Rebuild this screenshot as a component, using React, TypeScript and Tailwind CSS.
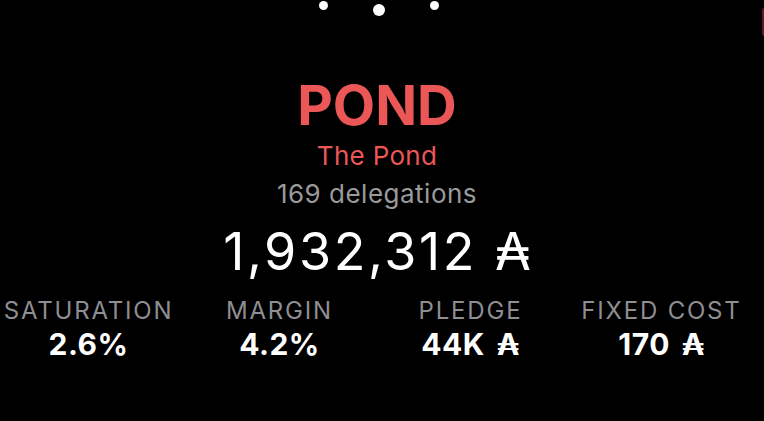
export default function App() {
  const stats = [
    { label: "SATURATION", value: "2.6%", ada: false },
    { label: "MARGIN", value: "4.2%", ada: false },
    { label: "PLEDGE", value: "44K", ada: true },
    { label: "FIXED COST", value: "170", ada: true },
  ];

  return (
    <div className="relative h-[421px] w-[764px] overflow-hidden bg-black font-['Inter','DejaVu_Sans',sans-serif]">
      {/* page dots */}
      <div className="-ml-[7px] flex h-[15px] items-start justify-center gap-[45px]">
        <span className="mt-[1px] h-[9px] w-[9px] rounded-full bg-white" />
        <span className="mt-[4px] h-[12px] w-[12px] rounded-full bg-white" />
        <span className="mt-[1px] h-[9px] w-[9px] rounded-full bg-white" />
      </div>

      {/* edge of next card */}
      <div className="absolute right-0 top-[8px] h-[28px] w-[2px] rounded-l-full bg-[#5c1736]" />

      <div className="-ml-[5px] flex w-[764px] flex-col items-center">
        <div className="mt-[63px] text-[55px] font-bold leading-none text-[#eb5757]">
          POND
        </div>
        <div className="mt-[10px] text-[26px] leading-none tracking-[0.3px] text-[#eb5757]">
          The Pond
        </div>
        <div className="mt-[12px] text-[26px] leading-none tracking-[0.5px] text-[#9a9a9a]">
          169 delegations
        </div>
        <div className="mt-[19px] flex items-baseline text-[52px] leading-none tracking-[2.6px] text-white">
          <span>1,932,312</span>
          <span className="ml-[18px] tracking-normal">₳</span>
        </div>
      </div>

      <div className="-ml-[7px] mt-[21px] grid w-[764px] grid-cols-4">
        {stats.map((s) => (
          <div key={s.label} className="flex flex-col items-center">
            <div className="text-[24px] leading-none tracking-[1.8px] text-[#8e8e93]">
              {s.label}
            </div>
            <div className="mt-[6px] flex items-baseline text-[30px] font-bold leading-none tracking-[0.5px] text-white">
              <span>{s.value}</span>
              {s.ada && <span className="ml-[12px]">₳</span>}
            </div>
          </div>
        ))}
      </div>

      <div className="mt-[60px] flex justify-between px-[8px] text-[24px] leading-none tracking-[1.5px] text-[#6e6e6e]">
        <span>ROA</span>
        <span>BLOCKS</span>
        <span>STAKE</span>
      </div>
    </div>
  );
}
